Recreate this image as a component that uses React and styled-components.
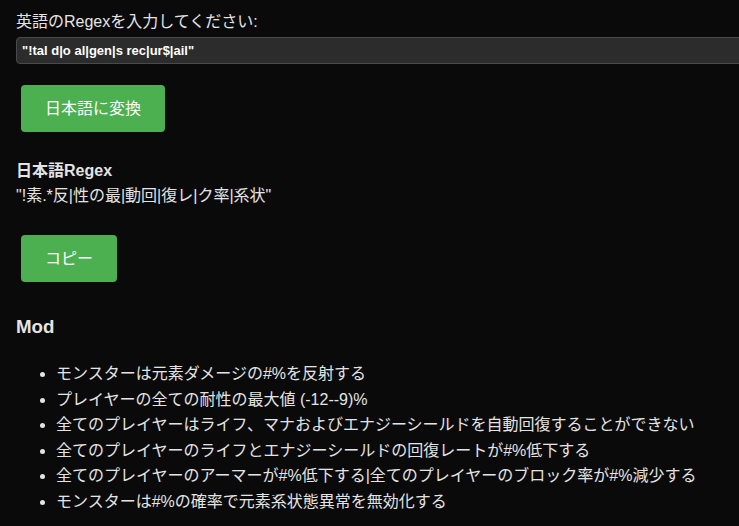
import React, { useState } from "react"
import styled, { createGlobalStyle } from "styled-components"

const GlobalStyle = createGlobalStyle`
  html, body {
    margin: 0;
    padding: 0;
    background: #0a0a0a;
    overflow: hidden;
  }

  body {
    color: #e4e4e4;
    font-family: "Liberation Sans", Arial, "Noto Sans CJK JP", sans-serif;
    font-size: 16px;
  }
`

const Page = styled.div`
  padding: 12px 0 0 16px;
  min-height: 526px;
  box-sizing: border-box;
`

const Label = styled.label`
  display: block;
  line-height: 20px;
`

const RegexInput = styled.input`
  display: block;
  box-sizing: content-box;
  width: 100%;
  height: 25px;
  margin-top: 5px;
  padding: 0 5px;
  background: #2c2c2c;
  border: 1px solid #4a4a4a;
  border-radius: 4px;
  color: #fff;
  font-family: "Liberation Sans", Arial, sans-serif;
  font-size: 13px;
  font-weight: bold;
  outline: none;
`

const Button = styled.button`
  display: block;
  height: 47px;
  margin: ${(p) => p.$top}px 0 0 5px;
  padding: 0 24px;
  background: #4caf50;
  border: none;
  border-radius: 4px;
  color: #fff;
  font-family: "Liberation Sans", Arial, "Noto Sans CJK JP", sans-serif;
  font-size: 16px;
  line-height: 20px;
  cursor: pointer;
`

const ResultTitle = styled.div`
  margin-top: 29px;
  font-weight: bold;
  line-height: 20px;
`

const ResultText = styled.div`
  margin-top: 5px;
  line-height: 20px;
`

const ModTitle = styled.h3`
  margin: 33px 0 0;
  font-size: 18.72px;
  line-height: 24px;
`

const ModList = styled.ul`
  margin: 22px 0 0;
  padding-left: 40px;
`

const ModItem = styled.li`
  line-height: 25.5px;
`

const mods = [
  "モンスターは元素ダメージの#%を反射する",
  "プレイヤーの全ての耐性の最大値 (-12--9)%",
  "全てのプレイヤーはライフ、マナおよびエナジーシールドを自動回復することができない",
  "全てのプレイヤーのライフとエナジーシールドの回復レートが#%低下する",
  "全てのプレイヤーのアーマーが#%低下する|全てのプレイヤーのブロック率が#%減少する",
  "モンスターは#%の確率で元素系状態異常を無効化する",
]

export default function App() {
  const [query, setQuery] = useState('"!tal d|o al|gen|s rec|ur$|ail"')

  return (
    <>
      <GlobalStyle />
      <Page>
        <Label htmlFor="regex">英語のRegexを入力してください:</Label>
        <RegexInput
          id="regex"
          value={query}
          onChange={(e) => setQuery(e.target.value)}
        />
        <Button $top={21}>日本語に変換</Button>

        <ResultTitle>日本語Regex</ResultTitle>
        <ResultText>"!素.*反|性の最|動回|復レ|ク率|系状"</ResultText>
        <Button $top={29}>コピー</Button>

        <ModTitle>Mod</ModTitle>
        <ModList>
          {mods.map((m) => (
            <ModItem key={m}>{m}</ModItem>
          ))}
        </ModList>
      </Page>
    </>
  )
}
